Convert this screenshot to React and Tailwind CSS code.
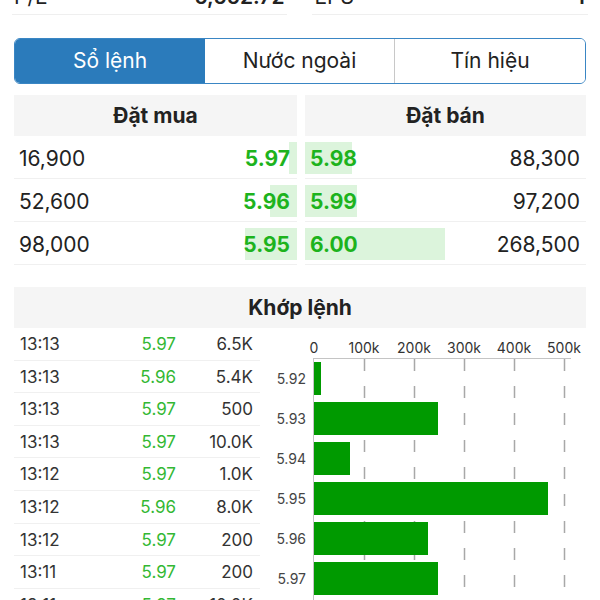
import React from 'react';

const bids = [
  { vol: '16,900', price: '5.97', bar: 8 },
  { vol: '52,600', price: '5.96', bar: 27 },
  { vol: '98,000', price: '5.95', bar: 52 },
];

const asks = [
  { vol: '88,300', price: '5.98', bar: 47 },
  { vol: '97,200', price: '5.99', bar: 52 },
  { vol: '268,500', price: '6.00', bar: 140 },
];

const trades = [
  ['13:13', '5.97', '6.5K'],
  ['13:13', '5.96', '5.4K'],
  ['13:13', '5.97', '500'],
  ['13:13', '5.97', '10.0K'],
  ['13:12', '5.97', '1.0K'],
  ['13:12', '5.96', '8.0K'],
  ['13:12', '5.97', '200'],
  ['13:11', '5.97', '200'],
  ['13:11', '5.97', '10.0K'],
];

const volumeBars = [
  { price: '5.92', w: 7 },
  { price: '5.93', w: 124 },
  { price: '5.94', w: 36 },
  { price: '5.95', w: 234 },
  { price: '5.96', w: 114 },
  { price: '5.97', w: 124 },
];

function VolumeChart() {
  const x0 = 54;
  return (
    <svg width="340" height="272" className="block">
      {['0', '100k', '200k', '300k', '400k', '500k'].map((t, i) => (
        <text
          key={t}
          x={x0 + i * 50}
          y={25}
          textAnchor="middle"
          fontSize="14"
          fill="#333"
          fontFamily="Inter, 'Liberation Sans', sans-serif"
        >
          {t}
        </text>
      ))}
      <line x1={x0} y1={30.5} x2={311} y2={30.5} stroke="#c4c4c4" strokeWidth="1" />
      <line x1={x0 - 0.5} y1={30} x2={x0 - 0.5} y2={272} stroke="#c4c4c4" strokeWidth="1" />
      {[1, 2, 3, 4, 5].map((i) => (
        <line
          key={i}
          x1={x0 + i * 50 + 0.5}
          y1={31}
          x2={x0 + i * 50 + 0.5}
          y2={272}
          stroke="#a8a8a8"
          strokeWidth="1.5"
          strokeDasharray="12 15"
        />
      ))}
      {volumeBars.map((b, i) => (
        <g key={b.price}>
          <text
            x={46}
            y={34 + i * 40 + 21.5}
            textAnchor="end"
            fontSize="14"
            fill="#444"
            fontFamily="Inter, 'Liberation Sans', sans-serif"
          >
            {b.price}
          </text>
          <rect x={x0} y={34 + i * 40} width={b.w} height={33} fill="#009a00" />
        </g>
      ))}
    </svg>
  );
}

export default function App() {
  return (
    <div
      className="w-[600px] h-[600px] overflow-hidden bg-white text-[#222]"
      style={{ fontFamily: "Inter, 'Liberation Sans', sans-serif" }}
    >
      {/* Stats row (scrolled off) */}
      <div className="flex gap-[25px] px-[12px] -mt-[20px]">
        <div className="flex-1 h-[35px] flex items-center justify-between border-b border-[#efefef] px-[2px] text-[21px]">
          <span>P/E</span>
          <span className="font-semibold">5,552.72</span>
        </div>
        <div className="flex-1 h-[35px] flex items-center justify-between border-b border-[#efefef] px-[3px] text-[21px]">
          <span>EPS</span>
          <span className="font-semibold">1</span>
        </div>
      </div>

      {/* Segmented control */}
      <div className="mx-[14px] mt-[23px] h-[46px] grid grid-cols-3 border border-[#3a86c4] rounded-[6px] overflow-hidden text-[21px]">
        <div className="bg-[#2b7bbb] text-white flex items-center justify-center">Sổ lệnh</div>
        <div className="bg-white flex items-center justify-center border-r border-[#c8c8c8]">Nước ngoài</div>
        <div className="bg-white flex items-center justify-center">Tín hiệu</div>
      </div>

      {/* Order book */}
      <div className="mx-[14px] mt-[11px] flex gap-[8px]">
        <div className="w-[283px]">
          <div className="h-[41px] bg-[#f5f5f5] flex items-center justify-center text-[21px] font-bold">Đặt mua</div>
          {bids.map((r) => (
            <div key={r.price} className="relative h-[43px] border-b border-[#f0f0f0] flex items-center justify-between pl-[5px] pr-[7px] pt-[4px] text-[21px]">
              <div className="absolute right-0 top-[6px] bottom-[4px] bg-[#dcf4dc]" style={{ width: r.bar }} />
              <span className="relative">{r.vol}</span>
              <span className="relative font-bold text-[#1db31d]">{r.price}</span>
            </div>
          ))}
        </div>
        <div className="w-[281px]">
          <div className="h-[41px] bg-[#f5f5f5] flex items-center justify-center text-[21px] font-bold">Đặt bán</div>
          {asks.map((r) => (
            <div key={r.price} className="relative h-[43px] border-b border-[#f0f0f0] flex items-center justify-between pl-[5px] pr-[6px] pt-[4px] text-[21px]">
              <div className="absolute left-0 top-[6px] bottom-[4px] bg-[#dcf4dc]" style={{ width: r.bar }} />
              <span className="relative font-bold text-[#1db31d]">{r.price}</span>
              <span className="relative">{r.vol}</span>
            </div>
          ))}
        </div>
      </div>

      {/* Matched orders */}
      <div className="mx-[14px] mt-[22px] h-[41px] bg-[#f5f5f5] flex items-center justify-center text-[21px] font-bold">
        Khớp lệnh
      </div>
      <div className="flex">
        <div className="ml-[14px] w-[246px]">
          {trades.map((t, i) => (
            <div key={i} className="h-[32.6px] border-b border-[#f0f0f0] flex items-center pl-[6px] pr-[7px] pt-[2px] text-[17px] text-[#333]">
              <span className="flex-1">{t[0]}</span>
              <span className="w-[60px] text-right text-[#33b833]">{t[1]}</span>
              <span className="w-[77px] text-right">{t[2]}</span>
            </div>
          ))}
        </div>
        <VolumeChart />
      </div>
    </div>
  );
}
